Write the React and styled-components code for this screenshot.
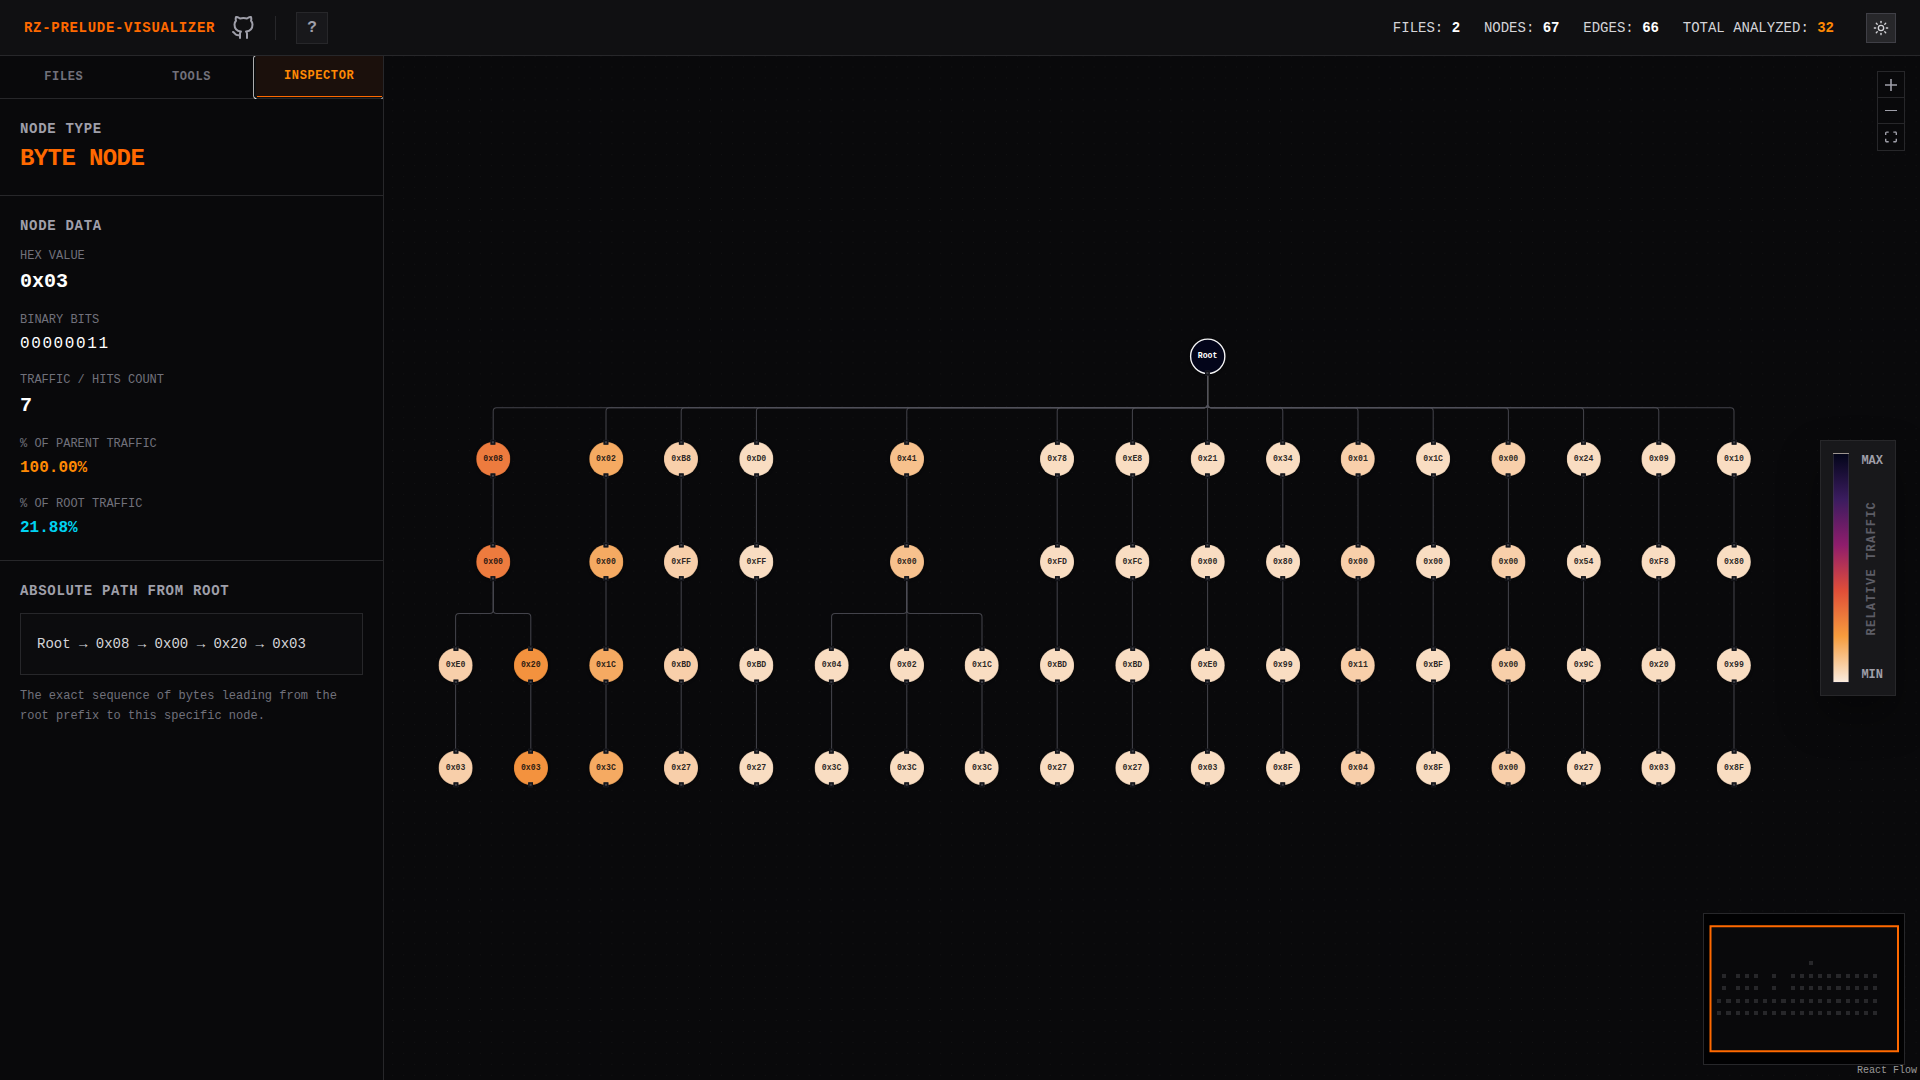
import React from "react";
import styled, { createGlobalStyle } from "styled-components";
import { Sun } from "lucide-react";

const MONO = '"Liberation Mono", "DejaVu Sans Mono", monospace';

const GlobalStyle = createGlobalStyle`
  *, *::before, *::after { box-sizing: border-box; }
  html { color-scheme: dark; }
  body { margin: 0; background: #09090b; font-family: ${MONO}; color: #e4e4e7; overflow: hidden; }
  h1, h2, p { margin: 0; }
  button { font-family: inherit; margin: 0; padding: 0; cursor: pointer; }
  svg { display: block; }
`;

/* ---------- shell ---------- */

const Page = styled.div`
  display: flex;
  flex-direction: column;
  width: 1920px;
  height: 1080px;
  overflow: hidden;
`;

const Header = styled.header`
  display: flex;
  align-items: center;
  justify-content: space-between;
  flex: none;
  height: 56px;
  padding: 0 24px;
  background: #101012;
  border-bottom: 1px solid #27272a;
`;

const Main = styled.div`
  display: flex;
  flex: 1;
  min-height: 0;
`;

const Brand = styled.div`
  display: flex;
  align-items: center;
  gap: 20px;
`;

const BrandName = styled.div`
  display: flex;
  align-items: center;
  gap: 16px;
  color: #9f9fa9;
`;

const GithubMark = styled.svg`
  width: 24px;
  height: 24px;
  fill: none;
  stroke: currentColor;
  stroke-width: 2;
  stroke-linecap: round;
  stroke-linejoin: round;
`;

const Title = styled.h1`
  font-size: 14px;
  line-height: 20px;
  font-weight: 700;
  letter-spacing: 0.7px;
  color: #ff6900;
`;

const Divider = styled.span`
  width: 1px;
  height: 24px;
  background: #27272a;
`;

const HelpButton = styled.button`
  width: 32px;
  height: 32px;
  font-size: 16px;
  font-weight: 700;
  color: #9f9fa9;
  background: #18181b;
  border: 1px solid #27272a;
`;

const Stats = styled.div`
  display: flex;
  align-items: center;
  gap: 23.8px;
  font-size: 14px;
  line-height: 20px;
  color: #d4d4d8;
  white-space: pre;
`;

const StatValue = styled.b`
  color: ${(p) => (p.$accent ? "#ff8904" : "#ffffff")};
`;

const HeaderRight = styled.div`
  display: flex;
  align-items: center;
  gap: 32px;
`;

const ThemeButton = styled.button`
  display: grid;
  place-items: center;
  width: 30px;
  height: 30px;
  color: #d4d4d8;
  background: #27272a;
  border: 1px solid #3f3f46;
`;

/* ---------- sidebar ---------- */

const Sidebar = styled.aside`
  flex: none;
  width: 384px;
  background: #09090b;
  border-right: 1px solid #27272a;
  overflow: hidden;
`;

const Tabs = styled.div`
  display: grid;
  grid-template-columns: repeat(3, 1fr);
  height: 43px;
  border-bottom: 1px solid #27272a;
`;

const Tab = styled.button`
  font-size: 12px;
  line-height: 16px;
  font-weight: 700;
  letter-spacing: 0.6px;
  border: 0;
  color: #71717b;
  background: transparent;
`;

const ActiveTab = styled(Tab)`
  position: relative;
  padding-bottom: 2px;
  color: #ff8904;
  background: #1b100c;
  box-shadow: inset 1px 0 0 #101010, inset 0 -1px 0 #101010;

  &::before {
    content: "";
    position: absolute;
    left: -2px;
    right: -1px;
    top: -1px;
    bottom: -1px;
    border: 1px solid #ffffff;
    border-radius: 3px;
    clip-path: polygon(0 0, 3px 0, 3px 100%, 0 100%, 0 0, 100% 100%, 100% calc(100% - 3px), calc(100% - 3px) 100%, 100% 100%);
  }

  &::after {
    content: "";
    position: absolute;
    left: 2px;
    right: 1px;
    bottom: 1px;
    height: 1px;
    background: #ff6900;
  }
`;

const Section = styled.section`
  padding: 20px;
  border-bottom: ${(p) => (p.$last ? "0" : "1px solid #27272a")};
`;

const SectionTitle = styled.h2`
  font-size: 14px;
  line-height: 20px;
  font-weight: 700;
  letter-spacing: 0.7px;
  color: #9f9fa9;
`;

const NodeType = styled.div`
  margin-top: 4px;
  font-size: 24px;
  line-height: 32px;
  font-weight: 700;
  letter-spacing: -0.6px;
  color: #ff6900;
`;

const Fields = styled.div`
  display: flex;
  flex-direction: column;
  gap: 16px;
  margin-top: 12px;
`;

const FieldLabel = styled.div`
  margin-bottom: 4px;
  font-size: 12px;
  line-height: 16px;
  color: #71717b;
`;

const FieldValue = styled.div`
  font-size: ${(p) => (p.$large ? "20px" : "16px")};
  line-height: ${(p) => (p.$large ? "28px" : "24px")};
  font-weight: ${(p) => (p.$plain ? 400 : 700)};
  letter-spacing: ${(p) => (p.$plain ? "1.6px" : "0")};
  color: ${(p) => p.$color || "#ffffff"};
`;

const PathBox = styled.div`
  margin-top: 12px;
  padding: 16px;
  font-size: 14px;
  line-height: 28px;
  color: #d4d4d8;
  background: #0c0c0e;
  border: 1px solid #27272a;
`;

const Hint = styled.p`
  margin-top: 11px;
  font-size: 12px;
  line-height: 20px;
  color: #71717b;
`;

/* ---------- graph canvas ---------- */

const ZOOM = 0.685;
const PITCH_X = 109.78;
const PITCH_Y = 150.2;
const ORIGIN_X = 71.6;
const ORIGIN_Y = 300.3;
const RADIUS = 25;

const Canvas = styled.main`
  position: relative;
  flex: 1;
  overflow: hidden;
  background: #09090b;
`;

const Layer = styled.svg`
  position: absolute;
  inset: 0;
`;

const Viewport = styled.div`
  position: absolute;
  left: 0;
  top: 0;
  transform-origin: 0 0;
  transform: translate(${ORIGIN_X}px, ${ORIGIN_Y}px) scale(${ZOOM});
`;

const Edges = styled.svg`
  position: absolute;
  left: 0;
  top: 0;
  overflow: visible;
  fill: none;
  stroke: #52525b;
  stroke-width: 1.5;
  stroke-opacity: 0.8;
`;

const NodeCircle = styled.div`
  position: absolute;
  display: flex;
  align-items: center;
  justify-content: center;
  width: ${(p) => (p.$root ? 52 : 50)}px;
  height: ${(p) => (p.$root ? 52 : 50)}px;
  border-radius: 50%;
  font-size: 12px;
  line-height: 16px;
  font-weight: 700;
  color: ${(p) => (p.$root ? "#ffffff" : "rgba(9, 9, 11, 0.87)")};
  background: ${(p) => p.$fill};
  border: ${(p) => (p.$root ? "2px solid #f4f4f5" : "1px solid rgba(9, 9, 11, 0.12)")};
  box-shadow: 0 1px 4px rgba(0, 0, 0, 0.5);
`;

const Handle = styled.i`
  position: absolute;
  left: 50%;
  ${(p) => (p.$bottom ? "bottom: -4px" : "top: -4px")};
  width: 7px;
  height: 7px;
  margin-left: -3.5px;
  background: #3f3f46;
  border: 2px solid #111217;
`;

const Controls = styled.div`
  position: absolute;
  top: 15px;
  right: 15px;
  display: flex;
  flex-direction: column;
  border: 1px solid #27272a;
`;

const ControlButton = styled.button`
  display: grid;
  place-items: center;
  width: 26px;
  height: 26px;
  background: #09090b;
  border: 0;
  border-bottom: 1px solid #27272a;
  fill: #9f9fa9;
  &:last-child { border-bottom: 0; padding-bottom: 1px; }
`;

const Legend = styled.div`
  position: absolute;
  top: 384px;
  right: 24px;
  display: flex;
  gap: 12px;
  height: 256px;
  padding: 12px;
  background: #18181b;
  border: 1px solid #27272a;
  box-shadow: 0 20px 40px rgba(0, 0, 0, 0.35);
`;

const LegendBar = styled.div`
  width: 16px;
  border: 1px solid rgba(63, 63, 70, 0.5);
  background-image: linear-gradient(to bottom, #03051a, #3b1c5f 20%, #8f1d6c 40%, #e04e38 60%, #f69c3d 80%, #faebdd);
`;

const LegendText = styled.div`
  display: flex;
  flex-direction: column;
  align-items: center;
  justify-content: space-between;
  font-size: 12px;
  line-height: 16px;
  font-weight: 700;
  color: #9f9fa9;
`;

const LegendCaption = styled.span`
  writing-mode: vertical-rl;
  transform: rotate(180deg);
  letter-spacing: 1.2px;
  color: #5d5d66;
`;

const MiniMapBox = styled.div`
  position: absolute;
  right: 15px;
  bottom: 15px;
  background: #09090b;
  border: 1px solid #27272a;
`;

const Attribution = styled.div`
  position: absolute;
  right: 0;
  bottom: 0;
  padding: 2px 3px;
  font-size: 10px;
  line-height: 15px;
  color: #999999;
`;

/* ---------- data ---------- */

const HEAT = {
  1: "#f9ddc2",
  2: "#f8cfaa",
  3: "#f7c18d",
  5: "#f5aa62",
  7: "#f3923e",
  9: "#ed7b3e",
};

const upper = [
  [0.5, 9, "08", "00"],
  [2, 5, "02", "00"],
  [3, 2, "B8", "FF"],
  [4, 1, "D0", "FF"],
  [6, 3, "41", "00"],
  [8, 1, "78", "FD"],
  [9, 1, "E8", "FC"],
  [10, 1, "21", "00"],
  [11, 1, "34", "80"],
  [12, 2, "01", "00"],
  [13, 1, "1C", "00"],
  [14, 2, "00", "00"],
  [15, 1, "24", "54"],
  [16, 1, "09", "F8"],
  [17, 1, "10", "80"],
];

const lower = [
  [2, "E0", "03", 0.5],
  [7, "20", "03", 0.5],
  [5, "1C", "3C"],
  [2, "BD", "27"],
  [1, "BD", "27"],
  [1, "04", "3C", 6],
  [1, "02", "3C"],
  [1, "1C", "3C", 6],
  [1, "BD", "27"],
  [1, "BD", "27"],
  [1, "E0", "03"],
  [1, "99", "8F"],
  [2, "11", "04"],
  [1, "BF", "8F"],
  [2, "00", "00"],
  [1, "9C", "27"],
  [1, "20", "03"],
  [1, "99", "8F"],
];

const nodes = [{ col: 10, row: 0, label: "Root", fill: "#03051a" }];
const edges = [];

upper.forEach(([col, hits, a, b]) => {
  nodes.push({ col, row: 1, label: `0x${a}`, fill: HEAT[hits] });
  nodes.push({ col, row: 2, label: `0x${b}`, fill: HEAT[hits] });
  edges.push([10, 0, col], [col, 1, col]);
});

lower.forEach(([hits, a, b, parent], col) => {
  nodes.push({ col, row: 3, label: `0x${a}`, fill: HEAT[hits] });
  nodes.push({ col, row: 4, label: `0x${b}`, fill: HEAT[hits] });
  edges.push([parent ?? col, 2, col], [col, 3, col]);
});

function edgePath([from, row, to]) {
  const x1 = from * PITCH_X;
  const x2 = to * PITCH_X;
  const y1 = row * PITCH_Y + RADIUS + 3;
  const y2 = (row + 1) * PITCH_Y - RADIUS - 3;
  if (x1 === x2) return `M${x1} ${y1}V${y2}`;
  const mid = (y1 + y2) / 2;
  const r = 5 * Math.sign(x2 - x1);
  return `M${x1} ${y1}V${mid - 5}Q${x1} ${mid} ${x1 + r} ${mid}H${x2 - r}Q${x2} ${mid} ${x2} ${mid + 5}V${y2}`;
}

const MINI = 0.12207;

function MiniMap() {
  const size = 50 * ZOOM * MINI;
  return (
    <MiniMapBox>
      <svg width="200" height="150">
        {nodes.map((n, i) => (
          <rect
            key={i}
            x={6.5 + (ORIGIN_X + n.col * PITCH_X * ZOOM) * MINI - size / 2}
            y={12.5 + (ORIGIN_Y + n.row * PITCH_Y * ZOOM) * MINI - size / 2}
            width={size}
            height={size}
            fill="#27272a"
            shapeRendering="crispEdges"
          />
        ))}
        <path
          d="M-10 -10H220V170H-10ZM6.5 12.3H194V137.3H6.5Z"
          fill="#000000"
          fillOpacity="0.8"
          fillRule="evenodd"
          stroke="#ff6900"
          strokeWidth="2"
        />
      </svg>
    </MiniMapBox>
  );
}

const fields = [
  { label: "HEX VALUE", value: "0x03", large: true },
  { label: "BINARY BITS", value: "00000011", plain: true },
  { label: "TRAFFIC / HITS COUNT", value: "7", large: true },
  { label: "% OF PARENT TRAFFIC", value: "100.00%", color: "#ff8904" },
  { label: "% OF ROOT TRAFFIC", value: "21.88%", color: "#00d3f2" },
];

const stats = [
  ["FILES", 2],
  ["NODES", 67],
  ["EDGES", 66],
  ["TOTAL ANALYZED", 32],
];

export default function App() {
  return (
    <Page>
      <GlobalStyle />
      <Header>
        <Brand>
          <BrandName>
            <Title>RZ-PRELUDE-VISUALIZER</Title>
            <GithubMark viewBox="0 0 24 24">
              <path d="M9 19c-5 1.5-5-2.5-7-3m14 6v-3.87a3.37 3.37 0 0 0-.94-2.61c3.14-.35 6.44-1.54 6.44-7A5.44 5.44 0 0 0 20 4.77 5.07 5.07 0 0 0 19.91 1S18.73.65 16 2.48a13.38 13.38 0 0 0-7 0C6.27.65 5.09 1 5.09 1A5.07 5.07 0 0 0 5 4.77a5.44 5.44 0 0 0-1.5 3.78c0 5.42 3.3 6.61 6.44 7A3.37 3.37 0 0 0 9 18.13V22" />
            </GithubMark>
          </BrandName>
          <Divider />
          <HelpButton>?</HelpButton>
        </Brand>
        <HeaderRight>
          <Stats>
            {stats.map(([name, value], i) => (
              <span key={name}>
                {name}: <StatValue $accent={i === 3}>{value}</StatValue>
              </span>
            ))}
          </Stats>
          <ThemeButton>
            <Sun size={16} />
          </ThemeButton>
        </HeaderRight>
      </Header>
      <Main>
        <Sidebar>
          <Tabs>
            <Tab>FILES</Tab>
            <Tab>TOOLS</Tab>
            <ActiveTab>INSPECTOR</ActiveTab>
          </Tabs>
          <Section>
            <SectionTitle>NODE TYPE</SectionTitle>
            <NodeType>BYTE NODE</NodeType>
          </Section>
          <Section>
            <SectionTitle>NODE DATA</SectionTitle>
            <Fields>
              {fields.map((f) => (
                <div key={f.label}>
                  <FieldLabel>{f.label}</FieldLabel>
                  <FieldValue $large={f.large} $plain={f.plain} $color={f.color}>
                    {f.value}
                  </FieldValue>
                </div>
              ))}
            </Fields>
          </Section>
          <Section $last>
            <SectionTitle>ABSOLUTE PATH FROM ROOT</SectionTitle>
            <PathBox>Root → 0x08 → 0x00 → 0x20 → 0x03</PathBox>
            <Hint>The exact sequence of bytes leading from the root prefix to this specific node.</Hint>
          </Section>
        </Sidebar>
        <Canvas>
          <Layer width="1536" height="1024">
            <defs>
              <pattern id="dots" x="3.2" y="5.5" width="10.96" height="10.96" patternUnits="userSpaceOnUse">
                <circle cx="5.48" cy="5.48" r="0.36" fill="#27272a" />
              </pattern>
            </defs>
            <rect width="1536" height="1024" fill="url(#dots)" />
          </Layer>
          <Viewport>
            <Edges width="1" height="1">
              {edges.map((e, i) => (
                <path key={i} d={edgePath(e)} />
              ))}
            </Edges>
            {nodes.map((n, i) => {
              const radius = n.row === 0 ? RADIUS + 1 : RADIUS;
              return (
                <NodeCircle
                  key={i}
                  $root={n.row === 0}
                  $fill={n.fill}
                  style={{ left: n.col * PITCH_X - radius, top: n.row * PITCH_Y - radius }}
                >
                  {n.label}
                  {n.row > 0 && <Handle />}
                  <Handle $bottom />
                </NodeCircle>
              );
            })}
          </Viewport>
          <Controls>
            <ControlButton>
              <svg width="12" height="12" viewBox="0 0 32 32">
                <path d="M32 18.133H18.133V32h-4.266V18.133H0v-4.266h13.867V0h4.266v13.867H32z" />
              </svg>
            </ControlButton>
            <ControlButton>
              <svg width="12" height="1" viewBox="0 0 12 1">
                <path d="M0 0h12v1H0z" />
              </svg>
            </ControlButton>
            <ControlButton>
              <svg width="12" height="12" viewBox="0 0 32 30">
                <path d="M3.692 4.63c0-.53.4-.938.939-.938h5.215V0H4.708C2.13 0 0 2.054 0 4.63v5.216h3.692V4.631zM27.354 0h-5.2v3.692h5.17c.53 0 .984.4.984.939v5.215H32V4.631A4.624 4.624 0 0027.354 0zm.954 24.83c0 .532-.4.94-.939.94h-5.215v3.768h5.215c2.577 0 4.631-2.13 4.631-4.707v-5.139h-3.692v5.139zm-23.677.94a.919.919 0 01-.939-.94v-5.138H0v5.139c0 2.577 2.13 4.707 4.708 4.707h5.138V25.77H4.631z" />
              </svg>
            </ControlButton>
          </Controls>
          <Legend>
            <LegendBar />
            <LegendText>
              <span>MAX</span>
              <LegendCaption>RELATIVE TRAFFIC</LegendCaption>
              <span>MIN</span>
            </LegendText>
          </Legend>
          <MiniMap />
          <Attribution>React Flow</Attribution>
        </Canvas>
      </Main>
    </Page>
  );
}
